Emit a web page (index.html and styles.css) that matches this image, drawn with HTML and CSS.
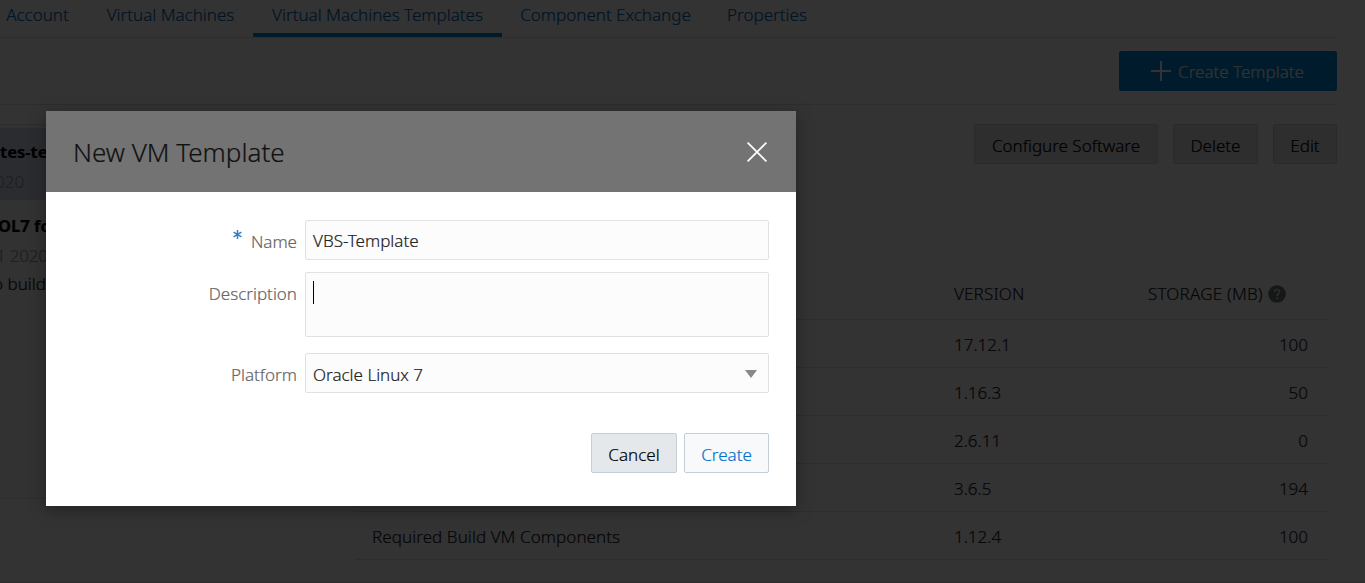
FILE: index.html
```html
<!DOCTYPE html>
<html lang="en">
<head>
<meta charset="utf-8">
<title>Virtual Machines Templates</title>
<link rel="stylesheet" href="styles.css">
</head>
<body>
<div class="page">
  <nav class="tabs">
    <a class="tab tab-account">Account</a>
    <a class="tab tab-vms">Virtual Machines</a>
    <a class="tab tab-templates active">Virtual Machines Templates</a>
    <a class="tab tab-exchange">Component Exchange</a>
    <a class="tab tab-properties">Properties</a>
  </nav>
  <div class="toolbar">
    <button class="btn-primary">
      <svg width="20" height="20" viewBox="0 0 20 20"><path d="M10 0V20M0 10H20" stroke="currentColor" stroke-width="2" fill="none"/></svg>
      <span>Create Template</span>
    </button>
  </div>
  <div class="content">
    <aside class="list">
      <div class="item selected">
        <div class="item-title">tes-te</div>
        <div class="item-date cut-date">020</div>
      </div>
      <div class="item">
        <div class="item-title cut-title">OL7 fo</div>
        <div class="item-date cut-year">1 2020</div>
        <div class="item-text">o build</div>
      </div>
    </aside>
    <section class="detail">
      <div class="actions">
        <button class="btn configure">Configure Software</button>
        <button class="btn delete">Delete</button>
        <button class="btn edit">Edit</button>
      </div>
      <div class="table">
        <div class="row head"><span></span><span class="version-head">VERSION</span><span class="storage-head">STORAGE (MB)
          <svg width="18" height="18" viewBox="0 0 18 18"><circle cx="9" cy="9" r="8.8" fill="#6c7577"/><path d="M6.5 7C6.5 3.6 11.6 3.7 11.6 6.8C11.6 8.8 9.1 8.8 9.1 11" fill="none" stroke="#d8dcdd" stroke-width="1.6"/><circle cx="9.1" cy="13.3" r="1.1" fill="#d8dcdd"/></svg></span></div>
        <div class="row"><span></span><span>17.12.1</span><span class="num">100</span></div>
        <div class="row"><span></span><span>1.16.3</span><span class="num">50</span></div>
        <div class="row"><span></span><span>2.6.11</span><span class="num">0</span></div>
        <div class="row"><span></span><span>3.6.5</span><span class="num">194</span></div>
        <div class="row"><span class="component">Required Build VM Components</span><span>1.12.4</span><span class="num">100</span></div>
      </div>
    </section>
  </div>
</div>
<div class="backdrop"></div>
<div class="dialog">
  <header class="dialog-head">
    <h1>New VM Template</h1>
    <svg width="20" height="20" viewBox="0 0 20 20"><path d="M.6 .6L19.4 19.4M19.4 .6L.6 19.4" stroke="#fff" stroke-width="1.8" fill="none"/></svg>
  </header>
  <div class="form">
    <div class="field name">
      <label><svg class="required" width="9" height="9" viewBox="0 0 9 9"><path d="M4.5 0V9M.6 2.2L8.4 6.8M8.4 2.2L.6 6.8" stroke="#2f7fc4" stroke-width="1.5"/></svg>Name</label>
      <div class="input">VBS-Template</div>
    </div>
    <div class="field description">
      <label>Description</label>
      <div class="input textarea"><i class="caret"></i></div>
    </div>
    <div class="field platform">
      <label>Platform</label>
      <div class="input select"><span>Oracle Linux 7</span><svg width="12" height="8" viewBox="0 0 12 8"><path d="M0 0H12L6 8Z" fill="#85898c"/></svg></div>
    </div>
  </div>
  <footer class="dialog-foot">
    <button class="dbtn cancel">Cancel</button>
    <button class="dbtn create">Create</button>
  </footer>
</div>
</body>
</html>
```
FILE: styles.css
```css
* { box-sizing: border-box; }
body {
  margin: 0;
  position: relative;
  width: 1365px;
  height: 583px;
  overflow: hidden;
  background: #fff;
  font: 300 17px/24px "Noto Sans", "Open Sans", sans-serif;
  -webkit-text-stroke: .2px;
  color: #222;
}
button { font: inherit; padding: 0; cursor: pointer; }
svg { display: block; flex: none; }

.page {
  height: 583px;
  padding-right: 28px;
  border-bottom: 1px solid #d4d4d4;
  overflow: hidden;
}
.tabs {
  display: flex;
  height: 38px;
  border-bottom: 1px solid #e2e2e2;
  color: #0067b3;
}
.tab {
  height: 37px;
  padding-top: 3px;
  text-align: center;
  white-space: nowrap;
  border-bottom: 4px solid transparent;
}
.tab.active { border-bottom-color: #0085dc; }
.tab-account { width: 88px; padding-right: 13px; }
.tab-vms { width: 165px; }
.tab-templates { width: 249px; }
.tab-exchange { width: 207px; }
.tab-properties { width: 116px; }

.toolbar {
  display: flex;
  justify-content: flex-end;
  align-items: center;
  height: 67px;
  border-bottom: 1px solid #e2e2e2;
}
.btn-primary {
  display: flex;
  align-items: center;
  justify-content: center;
  gap: 7px;
  width: 218px;
  height: 40px;
  padding-right: 1px;
  border: 0;
  border-radius: 2px;
  background: #0085dc;
  color: #fff;
}
.btn-primary span { padding-top: 2px; }

.content { display: flex; gap: 25px; padding-top: 19px; }
.list {
  flex: none;
  width: 330px;
  height: 375px;
  border-top: 1px solid #e2e2e2;
  border-bottom: 1px solid #e2e2e2;
  background: #f4faf6;
}
.item { white-space: nowrap; }
.item.selected {
  height: 72px;
  margin: 3px 0 14px;
  padding-top: 12px;
  background: #d4dded;
}
.item-title { font-weight: 700; font-size: 16.5px; color: #000; }
.item-date { margin-top: 6px; color: #999; }
.cut-date { margin-left: -5px; }
.cut-title { margin-left: -2px; }
.cut-year { margin-left: -4px; letter-spacing: -.2px; }
.item-text { margin: 4px 0 0 -7px; color: #111; }

.detail { flex: 1; }
.actions { display: flex; justify-content: flex-end; gap: 15px; }
.btn {
  height: 40px;
  padding-top: 3px;
  border: 1px solid #d0d0d0;
  border-radius: 2px;
  background: #e4e4e4;
  color: #000;
}
.configure { width: 184px; }
.delete { width: 85px; }
.edit { width: 64px; }

.table { margin: 105px 11px 0 0; }
.row {
  display: grid;
  grid-template-columns: 582px 194px 1fr;
  align-items: center;
  height: 48px;
  padding: 2px 18px 0 17px;
  border-bottom: 1px solid #e2e2e2;
}
.row.head { height: 51px; padding-top: 0; }
.version-head { letter-spacing: .15px; }
.storage-head {
  display: flex;
  align-items: center;
  gap: 5px;
  letter-spacing: .2px;
  white-space: nowrap;
}
.component { letter-spacing: .07px; }
.num { text-align: right; }

.backdrop {
  position: absolute;
  inset: 0;
  background: rgba(0, 0, 0, .8);
}
.dialog {
  position: absolute;
  left: 46px;
  top: 111px;
  width: 750px;
  height: 395px;
  background: #fff;
  box-shadow: 0 4px 16px rgba(0, 0, 0, .35);
}
.dialog-head {
  display: flex;
  align-items: center;
  justify-content: space-between;
  height: 81px;
  padding: 0 29px 0 27px;
  background: #737373;
}
.dialog-head h1 {
  margin: 0;
  padding-top: 1px;
  font-size: 26px;
  font-weight: 300;
  line-height: 36px;
  color: #111;
}
.form { padding: 28px 27px 0 0; }
.field { display: flex; justify-content: flex-end; gap: 8px; }
.field label {
  display: flex;
  padding-top: 10px;
  color: #666;
}
.input {
  width: 464px;
  height: 40px;
  padding: 8px 7px 0;
  border: 1px solid #e0e1e1;
  border-radius: 2px;
  background: #fcfcfc;
  color: #222;
}
.required { margin: 0 9px 0 0; }
.textarea { height: 65px; }
.caret { display: block; width: 1px; height: 23px; background: #000; }
.description { margin-top: 12px; }
.platform { margin-top: 16px; }
.select {
  display: flex;
  justify-content: space-between;
  padding: 9px 11px 0 7px;
}
.select svg { margin-top: 7px; }
.dialog-foot {
  display: flex;
  justify-content: flex-end;
  gap: 7px;
  padding: 40px 27px 0 0;
}
.dbtn {
  height: 40px;
  padding-top: 3px;
  border: 1px solid #c4ced7;
  border-radius: 2px;
}
.cancel { width: 86px; background: #e4e8eb; color: #000; }
.create { width: 85px; background: #f7f9fb; color: #0572ce; }
```
